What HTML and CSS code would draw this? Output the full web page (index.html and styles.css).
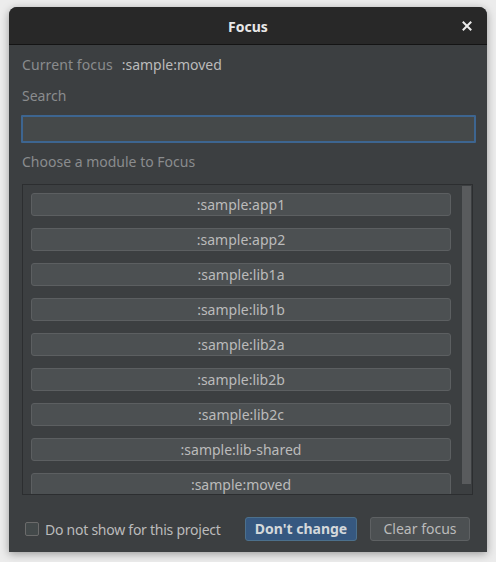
FILE: index.html
```html
<!DOCTYPE html>
<html>
<head>
<meta charset="utf-8">
<link rel="stylesheet" href="styles.css">
</head>
<body>
<div class="window">
  <div class="titlebar">
    <span class="title">Focus</span>
    <span class="close">
      <svg width="10" height="10" viewBox="0 0 10 10"><path d="M1.5 1.5 L8.5 8.5 M8.5 1.5 L1.5 8.5" stroke="#ececec" stroke-width="2" stroke-linecap="square"/></svg>
    </span>
  </div>
  <div class="content">
    <div class="row current"><span class="label">Current focus</span><span class="value">:sample:moved</span></div>
    <div class="row label search-label">Search</div>
    <div class="search"></div>
    <div class="row label choose">Choose a module to Focus</div>
    <div class="listbox">
      <div class="list">
        <div class="item">:sample:app1</div>
        <div class="item">:sample:app2</div>
        <div class="item">:sample:lib1a</div>
        <div class="item">:sample:lib1b</div>
        <div class="item">:sample:lib2a</div>
        <div class="item">:sample:lib2b</div>
        <div class="item">:sample:lib2c</div>
        <div class="item">:sample:lib-shared</div>
        <div class="item">:sample:moved</div>
      </div>
      <div class="scrollbar"><div class="thumb"></div></div>
    </div>
    <div class="footer">
      <label class="check"><span class="box"></span><span class="check-text">Do not show for this project</span></label>
      <div class="buttons">
        <div class="btn primary">Don't change</div>
        <div class="btn">Clear focus</div>
      </div>
    </div>
  </div>
</div>
</body>
</html>
```
FILE: styles.css
```css
html, body {
  margin: 0;
  padding: 0;
}
body {
  background: #ececec;
  width: 496px;
  height: 562px;
  overflow: hidden;
  font-family: "Noto Sans", "Open Sans", sans-serif;
  font-size: 14px;
  padding: 7px 0 0 9px;
  box-sizing: border-box;
}
.window {
  width: 478px;
  height: 545px;
  background: #3c3f41;
  border-radius: 8px 8px 0 0;
  box-shadow: 0 2px 9px rgba(0, 0, 0, 0.35);
  display: flex;
  flex-direction: column;
  overflow: hidden;
}
.titlebar {
  height: 37px;
  flex: none;
  background: #282828;
  border-bottom: 1px solid #141414;
  position: relative;
  display: flex;
  align-items: center;
  justify-content: center;
}
.title {
  color: #e8e8e8;
  font-weight: bold;
  font-size: 14px;
  margin-top: 1px;
}
.close {
  position: absolute;
  right: 15px;
  top: 14px;
  width: 10px;
  height: 10px;
  display: flex;
}
.content {
  flex: 1;
  display: flex;
  flex-direction: column;
  padding: 10px 13px 0 12px;
}
.row {
  height: 20px;
  line-height: 20px;
  display: flex;
}
.label {
  color: #8a8c8e;
}
.value {
  color: #bbbbbb;
  margin-left: 9px;
}
.current {
  padding-left: 1px;
}
.current .label {
  letter-spacing: 0.1px;
}
.search-label {
  margin-top: 11px;
  padding-left: 1px;
}
.search {
  margin-top: 9px;
  height: 24px;
  width: 451px;
  background: #45494a;
  border: 2px solid #3d6590;
  border-radius: 1px;
}
.choose {
  margin-top: 9px;
  padding-left: 1px;
}
.listbox {
  margin-top: 12px;
  margin-left: 1px;
  width: 449px;
  height: 309px;
  border: 1px solid #2c2e30;
  display: flex;
  overflow: hidden;
}
.list {
  flex: 1;
  padding: 8px 0 0 8px;
  display: flex;
  flex-direction: column;
  gap: 12px;
  overflow: hidden;
}
.item {
  flex: none;
  width: 418px;
  height: 21px;
  background: #4c5052;
  border: 1px solid #5c5f61;
  border-radius: 3px;
  color: #bbbbbb;
  text-align: center;
  line-height: 21px;
}
.scrollbar {
  width: 9px;
  padding: 1px 1px 0 0;
}
.thumb {
  width: 9px;
  height: 298px;
  background: #595b5d;
}
.footer {
  margin-top: 22px;
  display: flex;
  align-items: center;
  justify-content: space-between;
  padding-right: 4px;
}
.check {
  display: flex;
  align-items: center;
  color: #bbbbbb;
  padding-left: 4px;
}
.check-text {
  letter-spacing: -0.25px;
}
.box {
  width: 12px;
  height: 12px;
  border: 1px solid #6b6b6b;
  background: #43494a;
  border-radius: 2px;
  margin-right: 6px;
}
.buttons {
  display: flex;
  gap: 13px;
}
.btn {
  height: 22px;
  line-height: 22px;
  background: #4c5052;
  border: 1px solid #5e6163;
  border-radius: 3px;
  color: #bbbbbb;
  text-align: center;
  width: 98px;
}
.btn.primary {
  width: 110px;
  background: #365880;
  border-color: #4c708c;
  color: #d4d8db;
  font-weight: bold;
}
```
